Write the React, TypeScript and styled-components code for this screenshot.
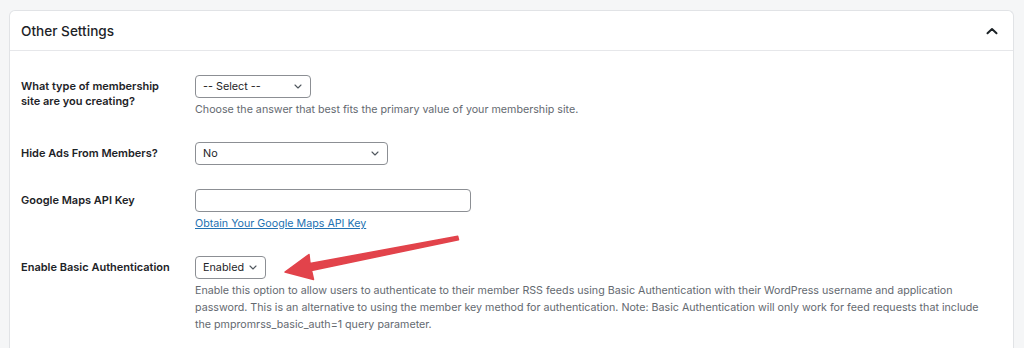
import React from "react";
import styled, { createGlobalStyle } from "styled-components";

const GlobalStyle = createGlobalStyle`
  html, body {
    margin: 0;
    padding: 0;
    background: #f5f6f7;
    font-family: Inter, "Liberation Sans", Arial, sans-serif;
    -webkit-font-smoothing: antialiased;
  }
  * { box-sizing: border-box; }
`;

const Page = styled.div`
  position: relative;
  width: 1024px;
  height: 348px;
  overflow: hidden;
  padding: 10px 10px 0 9px;
`;

const Card = styled.section`
  background: #ffffff;
  border: 1px solid #e1e3e6;
  border-bottom: none;
  border-radius: 6px 6px 0 0;
  height: 100%;
`;

const Header = styled.header`
  display: flex;
  align-items: center;
  justify-content: space-between;
  height: 40px;
  padding: 0 15px 0 11px;
  border-bottom: 1px solid #e6e7ea;
`;

const Title = styled.h2`
  margin: 0;
  font-size: 13.6px;
  font-weight: 500;
  color: #1d2327;
`;

const Body = styled.div`
  padding: 12px 19px 0 11px;
`;

const Row = styled.div`
  display: grid;
  grid-template-columns: 174px 1fr;
  padding: 12px 0;
`;

const Label = styled.div`
  font-size: 11px;
  font-weight: 600;
  line-height: 15px;
  color: #1d2327;
  padding-top: 4px;
`;

const Field = styled.div`
  display: flex;
  flex-direction: column;
  align-items: flex-start;
`;

const SelectBox = styled.div<{ $width: number }>`
  display: flex;
  align-items: center;
  justify-content: space-between;
  width: ${(p) => p.$width}px;
  height: 23px;
  padding: 0 8px 0 7px;
  border: 1px solid #8c8f94;
  border-radius: 4px;
  background: #fff;
  font-size: 10.8px;
  color: #1d2327;
`;

const TextInput = styled.div`
  width: 276px;
  height: 23px;
  border: 1px solid #8c8f94;
  border-radius: 4px;
  background: #fff;
`;

const Description = styled.p`
  margin: 3px 0 0;
  font-size: 10.7px;
  line-height: 17px;
  color: #646970;
  max-width: 800px;
`;

const Link = styled.a`
  margin-top: 3px;
  font-size: 10.7px;
  line-height: 17px;
  color: #2271b1;
  text-decoration: underline;
`;

const Overlay = styled.svg`
  position: absolute;
  left: 0;
  top: 0;
  pointer-events: none;
`;

const Chevron = () => (
  <svg width="8" height="5" viewBox="0 0 8 5" fill="none">
    <path d="M1 1l3 3 3-3" stroke="#50575e" strokeWidth="1.1" strokeLinecap="round" strokeLinejoin="round" />
  </svg>
);

const Select = ({ width, value }: { width: number; value: string }) => (
  <SelectBox $width={width}>
    <span>{value}</span>
    <Chevron />
  </SelectBox>
);

export default function App() {
  return (
    <>
      <GlobalStyle />
      <Page>
        <Card>
          <Header>
            <Title>Other Settings</Title>
            <svg width="12" height="8" viewBox="0 0 12 8" fill="none">
              <path d="M1.5 6.3L6 2l4.5 4.3" stroke="#1d2327" strokeWidth="2" strokeLinecap="round" strokeLinejoin="round" />
            </svg>
          </Header>
          <Body>
            <Row>
              <Label>
                What type of membership
                <br />
                site are you creating?
              </Label>
              <Field>
                <Select width={116} value="-- Select --" />
                <Description>Choose the answer that best fits the primary value of your membership site.</Description>
              </Field>
            </Row>
            <Row>
              <Label>Hide Ads From Members?</Label>
              <Field>
                <Select width={193} value="No" />
              </Field>
            </Row>
            <Row>
              <Label>Google Maps API Key</Label>
              <Field>
                <TextInput />
                <Link href="#">Obtain Your Google Maps API Key</Link>
              </Field>
            </Row>
            <Row>
              <Label>Enable Basic Authentication</Label>
              <Field>
                <Select width={71} value="Enabled" />
                <Description>
                  Enable this option to allow users to authenticate to their member RSS feeds using Basic Authentication with their WordPress username and application password. This is an alternative to using the member key method for authentication. Note: Basic Authentication will only work for feed requests that include the pmpromrss_basic_auth=1 query parameter.
                </Description>
              </Field>
            </Row>
          </Body>
        </Card>
        <Overlay width="1024" height="348" viewBox="0 0 1024 348">
          <polygon
            points="285,272 309,254.5 310,263.5 457.7,236.3 458.5,239.7 311.5,270.5 313.5,279.5"
            fill="#e2434b"
            stroke="#e2434b"
            strokeWidth="1.5"
            strokeLinejoin="round"
          />
        </Overlay>
      </Page>
    </>
  );
}
